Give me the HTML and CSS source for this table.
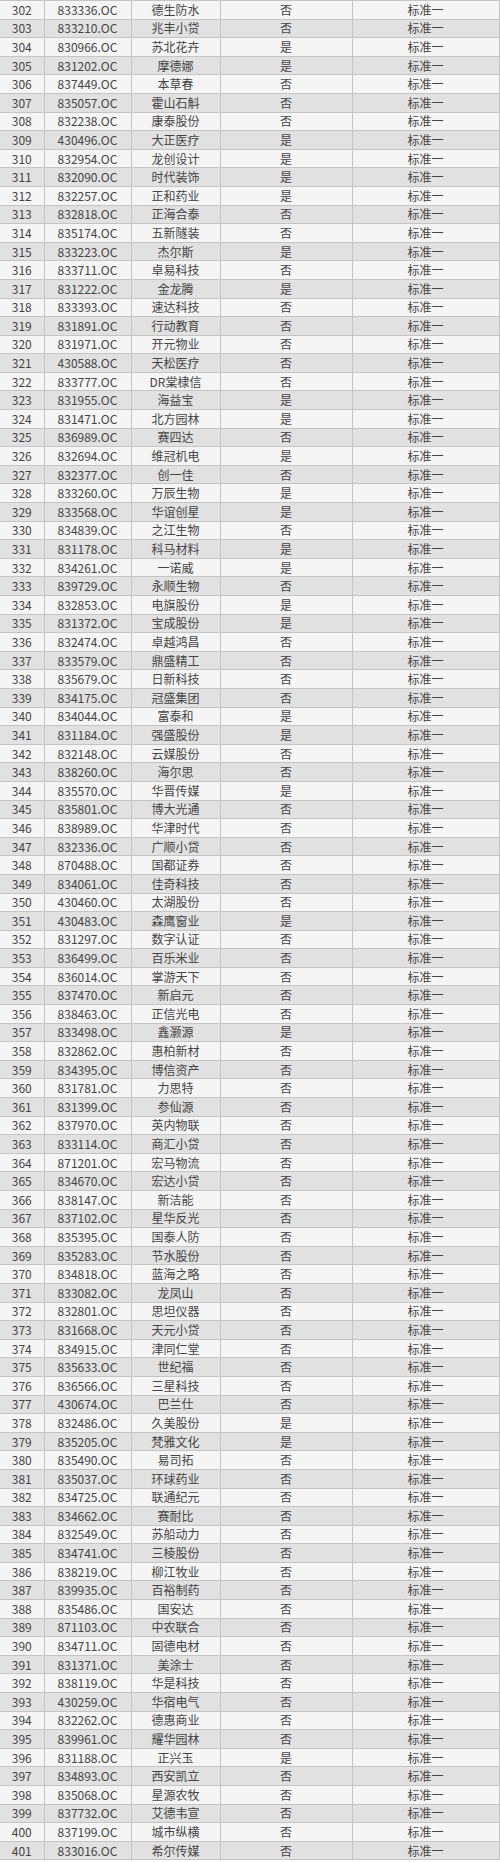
FILE: index.html
```html
<!DOCTYPE html>
<html lang="zh">
<head>
<meta charset="utf-8">
<link rel="stylesheet" href="styles.css">
</head>
<body>
<table class="list">
<colgroup><col class="c1"><col class="c2"><col class="c3"><col class="c4"><col class="c5"></colgroup>
<tbody>
<tr><td>302</td><td>833336.OC</td><td>德生防水</td><td>否</td><td>标准一</td></tr>
<tr><td>303</td><td>833210.OC</td><td>兆丰小贷</td><td>否</td><td>标准一</td></tr>
<tr><td>304</td><td>830966.OC</td><td>苏北花卉</td><td>是</td><td>标准一</td></tr>
<tr><td>305</td><td>831202.OC</td><td>摩德娜</td><td>是</td><td>标准一</td></tr>
<tr><td>306</td><td>837449.OC</td><td>本草春</td><td>否</td><td>标准一</td></tr>
<tr><td>307</td><td>835057.OC</td><td>霍山石斛</td><td>否</td><td>标准一</td></tr>
<tr><td>308</td><td>832238.OC</td><td>康泰股份</td><td>否</td><td>标准一</td></tr>
<tr><td>309</td><td>430496.OC</td><td>大正医疗</td><td>是</td><td>标准一</td></tr>
<tr><td>310</td><td>832954.OC</td><td>龙创设计</td><td>是</td><td>标准一</td></tr>
<tr><td>311</td><td>832090.OC</td><td>时代装饰</td><td>是</td><td>标准一</td></tr>
<tr><td>312</td><td>832257.OC</td><td>正和药业</td><td>是</td><td>标准一</td></tr>
<tr><td>313</td><td>832818.OC</td><td>正海合泰</td><td>否</td><td>标准一</td></tr>
<tr><td>314</td><td>835174.OC</td><td>五新隧装</td><td>否</td><td>标准一</td></tr>
<tr><td>315</td><td>833223.OC</td><td>杰尔斯</td><td>是</td><td>标准一</td></tr>
<tr><td>316</td><td>833711.OC</td><td>卓易科技</td><td>否</td><td>标准一</td></tr>
<tr><td>317</td><td>831222.OC</td><td>金龙腾</td><td>是</td><td>标准一</td></tr>
<tr><td>318</td><td>833393.OC</td><td>速达科技</td><td>否</td><td>标准一</td></tr>
<tr><td>319</td><td>831891.OC</td><td>行动教育</td><td>否</td><td>标准一</td></tr>
<tr><td>320</td><td>831971.OC</td><td>开元物业</td><td>否</td><td>标准一</td></tr>
<tr><td>321</td><td>430588.OC</td><td>天松医疗</td><td>否</td><td>标准一</td></tr>
<tr><td>322</td><td>833777.OC</td><td>DR棠棣信</td><td>否</td><td>标准一</td></tr>
<tr><td>323</td><td>831955.OC</td><td>海益宝</td><td>是</td><td>标准一</td></tr>
<tr><td>324</td><td>831471.OC</td><td>北方园林</td><td>是</td><td>标准一</td></tr>
<tr><td>325</td><td>836989.OC</td><td>赛四达</td><td>否</td><td>标准一</td></tr>
<tr><td>326</td><td>832694.OC</td><td>维冠机电</td><td>是</td><td>标准一</td></tr>
<tr><td>327</td><td>832377.OC</td><td>创一佳</td><td>否</td><td>标准一</td></tr>
<tr><td>328</td><td>833260.OC</td><td>万辰生物</td><td>是</td><td>标准一</td></tr>
<tr><td>329</td><td>833568.OC</td><td>华谊创星</td><td>是</td><td>标准一</td></tr>
<tr><td>330</td><td>834839.OC</td><td>之江生物</td><td>否</td><td>标准一</td></tr>
<tr><td>331</td><td>831178.OC</td><td>科马材料</td><td>是</td><td>标准一</td></tr>
<tr><td>332</td><td>834261.OC</td><td>一诺威</td><td>是</td><td>标准一</td></tr>
<tr><td>333</td><td>839729.OC</td><td>永顺生物</td><td>否</td><td>标准一</td></tr>
<tr><td>334</td><td>832853.OC</td><td>电旗股份</td><td>是</td><td>标准一</td></tr>
<tr><td>335</td><td>831372.OC</td><td>宝成股份</td><td>是</td><td>标准一</td></tr>
<tr><td>336</td><td>832474.OC</td><td>卓越鸿昌</td><td>否</td><td>标准一</td></tr>
<tr><td>337</td><td>833579.OC</td><td>鼎盛精工</td><td>否</td><td>标准一</td></tr>
<tr><td>338</td><td>835679.OC</td><td>日新科技</td><td>否</td><td>标准一</td></tr>
<tr><td>339</td><td>834175.OC</td><td>冠盛集团</td><td>否</td><td>标准一</td></tr>
<tr><td>340</td><td>834044.OC</td><td>富泰和</td><td>是</td><td>标准一</td></tr>
<tr><td>341</td><td>831184.OC</td><td>强盛股份</td><td>是</td><td>标准一</td></tr>
<tr><td>342</td><td>832148.OC</td><td>云媒股份</td><td>否</td><td>标准一</td></tr>
<tr><td>343</td><td>838260.OC</td><td>海尔思</td><td>否</td><td>标准一</td></tr>
<tr><td>344</td><td>835570.OC</td><td>华晋传媒</td><td>是</td><td>标准一</td></tr>
<tr><td>345</td><td>835801.OC</td><td>博大光通</td><td>否</td><td>标准一</td></tr>
<tr><td>346</td><td>838989.OC</td><td>华津时代</td><td>否</td><td>标准一</td></tr>
<tr><td>347</td><td>832336.OC</td><td>广顺小贷</td><td>否</td><td>标准一</td></tr>
<tr><td>348</td><td>870488.OC</td><td>国都证券</td><td>否</td><td>标准一</td></tr>
<tr><td>349</td><td>834061.OC</td><td>佳奇科技</td><td>否</td><td>标准一</td></tr>
<tr><td>350</td><td>430460.OC</td><td>太湖股份</td><td>否</td><td>标准一</td></tr>
<tr><td>351</td><td>430483.OC</td><td>森鹰窗业</td><td>是</td><td>标准一</td></tr>
<tr><td>352</td><td>831297.OC</td><td>数字认证</td><td>否</td><td>标准一</td></tr>
<tr><td>353</td><td>836499.OC</td><td>百乐米业</td><td>否</td><td>标准一</td></tr>
<tr><td>354</td><td>836014.OC</td><td>掌游天下</td><td>否</td><td>标准一</td></tr>
<tr><td>355</td><td>837470.OC</td><td>新启元</td><td>否</td><td>标准一</td></tr>
<tr><td>356</td><td>838463.OC</td><td>正信光电</td><td>否</td><td>标准一</td></tr>
<tr><td>357</td><td>833498.OC</td><td>鑫灏源</td><td>是</td><td>标准一</td></tr>
<tr><td>358</td><td>832862.OC</td><td>惠柏新材</td><td>否</td><td>标准一</td></tr>
<tr><td>359</td><td>834395.OC</td><td>博信资产</td><td>否</td><td>标准一</td></tr>
<tr><td>360</td><td>831781.OC</td><td>力思特</td><td>否</td><td>标准一</td></tr>
<tr><td>361</td><td>831399.OC</td><td>参仙源</td><td>否</td><td>标准一</td></tr>
<tr><td>362</td><td>837970.OC</td><td>英内物联</td><td>否</td><td>标准一</td></tr>
<tr><td>363</td><td>833114.OC</td><td>商汇小贷</td><td>否</td><td>标准一</td></tr>
<tr><td>364</td><td>871201.OC</td><td>宏马物流</td><td>否</td><td>标准一</td></tr>
<tr><td>365</td><td>834670.OC</td><td>宏达小贷</td><td>否</td><td>标准一</td></tr>
<tr><td>366</td><td>838147.OC</td><td>新洁能</td><td>否</td><td>标准一</td></tr>
<tr><td>367</td><td>837102.OC</td><td>星华反光</td><td>否</td><td>标准一</td></tr>
<tr><td>368</td><td>835395.OC</td><td>国泰人防</td><td>否</td><td>标准一</td></tr>
<tr><td>369</td><td>835283.OC</td><td>节水股份</td><td>否</td><td>标准一</td></tr>
<tr><td>370</td><td>834818.OC</td><td>蓝海之略</td><td>否</td><td>标准一</td></tr>
<tr><td>371</td><td>833082.OC</td><td>龙凤山</td><td>否</td><td>标准一</td></tr>
<tr><td>372</td><td>832801.OC</td><td>思坦仪器</td><td>否</td><td>标准一</td></tr>
<tr><td>373</td><td>831668.OC</td><td>天元小贷</td><td>否</td><td>标准一</td></tr>
<tr><td>374</td><td>834915.OC</td><td>津同仁堂</td><td>否</td><td>标准一</td></tr>
<tr><td>375</td><td>835633.OC</td><td>世纪福</td><td>否</td><td>标准一</td></tr>
<tr><td>376</td><td>836566.OC</td><td>三星科技</td><td>否</td><td>标准一</td></tr>
<tr><td>377</td><td>430674.OC</td><td>巴兰仕</td><td>否</td><td>标准一</td></tr>
<tr><td>378</td><td>832486.OC</td><td>久美股份</td><td>是</td><td>标准一</td></tr>
<tr><td>379</td><td>835205.OC</td><td>梵雅文化</td><td>是</td><td>标准一</td></tr>
<tr><td>380</td><td>835490.OC</td><td>易司拓</td><td>否</td><td>标准一</td></tr>
<tr><td>381</td><td>835037.OC</td><td>环球药业</td><td>否</td><td>标准一</td></tr>
<tr><td>382</td><td>834725.OC</td><td>联通纪元</td><td>否</td><td>标准一</td></tr>
<tr><td>383</td><td>834662.OC</td><td>赛耐比</td><td>否</td><td>标准一</td></tr>
<tr><td>384</td><td>832549.OC</td><td>苏船动力</td><td>否</td><td>标准一</td></tr>
<tr><td>385</td><td>834741.OC</td><td>三棱股份</td><td>否</td><td>标准一</td></tr>
<tr><td>386</td><td>838219.OC</td><td>柳江牧业</td><td>否</td><td>标准一</td></tr>
<tr><td>387</td><td>839935.OC</td><td>百裕制药</td><td>否</td><td>标准一</td></tr>
<tr><td>388</td><td>835486.OC</td><td>国安达</td><td>否</td><td>标准一</td></tr>
<tr><td>389</td><td>871103.OC</td><td>中农联合</td><td>否</td><td>标准一</td></tr>
<tr><td>390</td><td>834711.OC</td><td>固德电材</td><td>否</td><td>标准一</td></tr>
<tr><td>391</td><td>831371.OC</td><td>美涂士</td><td>否</td><td>标准一</td></tr>
<tr><td>392</td><td>838119.OC</td><td>华是科技</td><td>否</td><td>标准一</td></tr>
<tr><td>393</td><td>430259.OC</td><td>华宿电气</td><td>否</td><td>标准一</td></tr>
<tr><td>394</td><td>832262.OC</td><td>德惠商业</td><td>否</td><td>标准一</td></tr>
<tr><td>395</td><td>839961.OC</td><td>耀华园林</td><td>否</td><td>标准一</td></tr>
<tr><td>396</td><td>831188.OC</td><td>正兴玉</td><td>是</td><td>标准一</td></tr>
<tr><td>397</td><td>834893.OC</td><td>西安凯立</td><td>否</td><td>标准一</td></tr>
<tr><td>398</td><td>835068.OC</td><td>星源农牧</td><td>否</td><td>标准一</td></tr>
<tr><td>399</td><td>837732.OC</td><td>艾德韦宣</td><td>否</td><td>标准一</td></tr>
<tr><td>400</td><td>837199.OC</td><td>城市纵横</td><td>否</td><td>标准一</td></tr>
<tr><td>401</td><td>833016.OC</td><td>希尔传媒</td><td>否</td><td>标准一</td></tr>
</tbody>
</table>
</body>
</html>
```
FILE: styles.css
```css
html, body {
  margin: 0;
  padding: 0;
  background: #ffffff;
}
.list {
  width: 499px;
  border-collapse: collapse;
  table-layout: fixed;
  font-family: "Noto Sans CJK SC", "Noto Sans", sans-serif;
  font-size: 12px;
  color: #444444;
}
.c1 { width: 44px; }
.c2 { width: 87px; }
.c3 { width: 89px; }
.c4 { width: 132px; }
.c5 { width: 147px; }
.list td {
  height: 17.6px;
  padding: 0;
  border: 1px solid #c4c4c4;
  border-left-color: #cfcfcf;
  text-align: center;
  vertical-align: middle;
  line-height: 14px;
  white-space: nowrap;
  overflow: hidden;
}
.list td:first-child {
  border-left: none;
}
.list tr:nth-child(odd) td {
  background: #f5f5f5;
}
.list tr:nth-child(even) td {
  background: #e1e1e1;
}
```
